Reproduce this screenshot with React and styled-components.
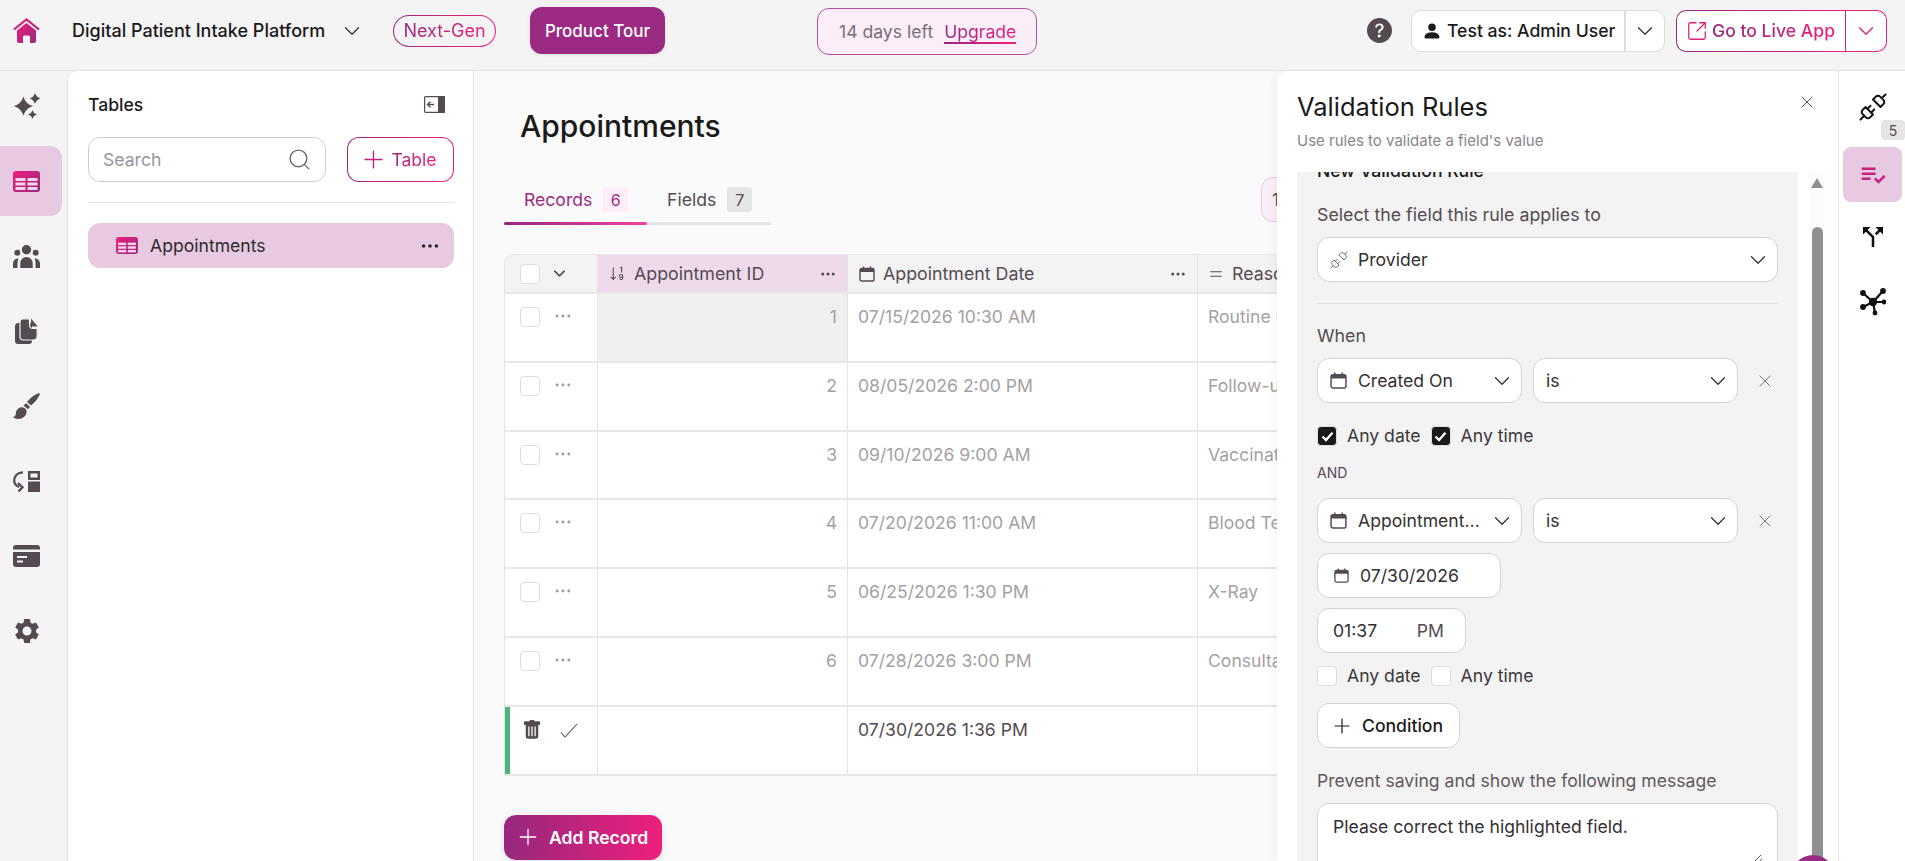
import React from "react";
import styled, { createGlobalStyle } from "styled-components";
import {
  ChevronDown, Search, Plus, X, Ellipsis, Unplug, SquareArrowOutUpRight, Equal,
} from "lucide-react";
import { BsSortNumericDown, BsTrashFill, BsPersonFill, BsQuestionCircleFill } from "react-icons/bs";
import { MdPlaylistAddCheck, MdCallSplit, MdSettings } from "react-icons/md";

const GRAD = "linear-gradient(90deg, #96287e, #ee1f7c)";
const INK = "#544b52";
const BASE = "17.6px";

const GlobalStyle = createGlobalStyle`
    html, body {
        margin: 0;
        height: 100%;
        overflow: hidden;
        background: #f4f4f4;
    }
    body, button, input {
        font-family: Inter, "Liberation Sans", sans-serif;
        font-size: ${BASE};
        color: #1b1a1b;
    }
    * {
        box-sizing: border-box;
    }
`

const Page = styled.div`
    height: 861px;
    display: flex;
    flex-direction: column;
    overflow: hidden;
`

const Header = styled.header`
    height: 71px;
    flex: none;
    display: flex;
    align-items: center;
    border-bottom: 1px solid #e3e3e3;
    padding: 0 18px 9px 13px;
`

const HomeLink = styled.div`
    width: 27px;
    height: 25px;
    margin-right: 32px;
    display: flex;
`

const AppName = styled.div`
    font-weight: 500;
    font-size: 18px;
    width: 252px;
    white-space: nowrap;
`

const HeaderChevron = styled.div`
    margin: 0 0 0 18px;
    width: 20px;
    display: flex;
    color: #333;
`

// lucide draws the chevron in the middle half of its box, so the box is trimmed
const Caret = styled(ChevronDown).attrs({ size: 26, strokeWidth: 1.2 })`
    flex: none;
    margin: -3px;
`

const GenPill = styled.div`
    margin-left: 31px;
    height: 32px;
    width: 103px;
    border-radius: 16px;
    border: 1.5px solid transparent;
    background: linear-gradient(#f4f4f4, #f4f4f4) padding-box, ${GRAD} border-box;
    display: flex;
    align-items: center;
    justify-content: center;
    font-size: 18px;
`

const GradText = styled.span`
    background: ${GRAD};
    -webkit-background-clip: text;
    background-clip: text;
    color: transparent;
`

const TourButton = styled.button`
    margin-left: 34px;
    width: 135px;
    height: 47px;
    border: none;
    border-radius: 12px;
    background: #9b2a82;
    color: #fff;
    font-size: 17px;
    font-weight: 500;
    box-shadow: 0 1px 4px rgba(0, 0, 0, 0.08);
`

const TrialBox = styled.div`
    margin: 2px 0 0 152px;
    width: 220px;
    height: 47px;
    border: 1px solid #b34f9f;
    border-radius: 12px;
    background: #fbeef9;
    display: flex;
    align-items: center;
    padding-left: 21px;
    gap: 11px;
    color: #7a6f76;
`

const UpgradeLink = styled(GradText)`
    position: relative;
    &::after {
        content: "";
        position: absolute;
        left: 0;
        right: 0;
        bottom: -2px;
        height: 2px;
        background: ${GRAD};
    }
`

const HeaderRight = styled.div`
    margin-left: auto;
    display: flex;
    align-items: center;
`

const HelpIcon = styled.div`
    display: flex;
    color: ${INK};
    margin-right: 19px;
`

const SplitButton = styled.div`
    height: 42px;
    display: flex;
    align-items: stretch;
    border-radius: 10px;
    border: 1px solid ${p => (p.$brand ? "transparent" : "#dcdcdc")};
    background: ${p =>
        p.$brand
            ? `linear-gradient(#fff, #fff) padding-box, ${GRAD} border-box`
            : "#fff"};
    margin-left: ${p => (p.$brand ? "11px" : "0")};
`

const SplitMain = styled.div`
    display: flex;
    align-items: center;
    gap: ${p => p.$gap}px;
    padding: 0 0 0 ${p => p.$pad}px;
    width: ${p => p.$width}px;
    font-weight: 500;
    white-space: nowrap;
`

const SplitCaret = styled.div`
    width: ${p => p.$width}px;
    display: flex;
    align-items: center;
    justify-content: center;
    border-left: ${p => (p.$brand ? "1px solid #d21f7c" : "2px solid #dcdcdc")};
    color: ${p => (p.$brand ? "#e0217c" : "#333")};
`

const Body = styled.div`
    flex: 1;
    min-height: 0;
    display: flex;
`

const LeftNav = styled.nav`
    width: 67px;
    flex: none;
    display: flex;
    flex-direction: column;
    gap: 5px;
`

const NavItem = styled.div`
    width: 62px;
    height: 70px;
    flex: none;
    display: flex;
    align-items: center;
    justify-content: center;
    padding-right: 9px;
    border-radius: 0 12px 12px 0;
    color: ${INK};
    background: ${p => (p.$active ? "#e8c9e2" : "transparent")};
`

const Sidebar = styled.aside`
    width: 407px;
    flex: none;
    background: #fff;
    border: 1px solid #e3e3e3;
    border-width: 0 1px 0 1px;
    border-top-left-radius: 10px;
    padding: 0 19px 0 20px;
`

const SidebarHead = styled.div`
    height: 66px;
    display: flex;
    align-items: center;
    justify-content: space-between;
    padding-right: 9px;
    font-weight: 500;
`

const SearchRow = styled.div`
    display: flex;
    justify-content: space-between;
    padding-bottom: 20px;
    border-bottom: 1px solid #e3e3e3;
`

const SearchBox = styled.div`
    width: 238px;
    height: 45px;
    border: 1px solid #cfcdce;
    border-radius: 12px;
    display: flex;
    align-items: center;
    justify-content: space-between;
    padding: 0 13px 0 14px;
    color: #97939a;
`

const OutlineButton = styled.button`
    width: 107px;
    height: 45px;
    border: 1px solid transparent;
    border-radius: 12px;
    background: linear-gradient(#fff, #fff) padding-box, ${GRAD} border-box;
    display: flex;
    align-items: center;
    justify-content: center;
    gap: 8px;
    padding: 0;
    color: #e0217c;
`

const TablePlus = styled(Plus).attrs({ size: 29, strokeWidth: 1.1 })`
    margin: -5px;
    color: #c2227f;
`

const TableLink = styled.div`
    margin-top: 20px;
    height: 45px;
    border-radius: 12px;
    background: #e8c9e2;
    display: flex;
    align-items: center;
    padding: 0 13px 0 28px;
    gap: 12px;
    color: #2e2a2d;
`

const Main = styled.main`
    position: relative;
    flex: 1;
    min-width: 0;
    background: #fafafa;
    overflow: hidden;
    padding: 36px 0 0 30px;
`

const Title = styled.h1`
    margin: 0 0 0 16px;
    font-size: 30px;
    line-height: 38px;
    font-weight: 500;
`

const TabRow = styled.div`
    display: flex;
    align-items: flex-start;
    margin-top: 42px;
`

const TabBar = styled.div`
    display: flex;
    border-bottom: 3px solid #e5e5e5;
    height: 38px;
`

const Tab = styled.div`
    position: relative;
    width: ${p => p.$width}px;
    height: 38px;
    padding-left: 20px;
    display: flex;
    align-items: flex-start;
    gap: 11px;
    line-height: 26px;
    color: ${p => (p.$active ? "#9b2a82" : INK)};
    ${p => p.$active && `
        &::after {
            content: "";
            position: absolute;
            left: 0;
            right: 0;
            bottom: 0;
            height: 3px;
            border-radius: 2px;
            background: linear-gradient(90deg, #96287e, #f2429b);
        }
    `}
`

const TabCount = styled.span`
    width: 25px;
    height: 25px;
    border-radius: 3px;
    display: flex;
    align-items: center;
    justify-content: center;
    font-size: 16px;
    background: ${p => (p.$active ? "#fceef8" : "#e5e5e5")};
`

const FilterChip = styled.div`
    margin: -10px 0 0 490px;
    width: 180px;
    height: 45px;
    border: 1px solid #e8c9e2;
    border-radius: 12px;
    background: #fceef8;
    display: flex;
    align-items: center;
    padding-left: 10px;
    color: ${INK};
`

const Grid = styled.div`
    margin-top: 29px;
    border-left: 1px solid #e3e3e3;
    border-top-left-radius: 10px;
    background: #fff;
`

const Row = styled.div`
    display: grid;
    grid-template-columns: 93px 250px 350px 1fr;
    height: ${p => (p.$head ? 40 : 68.8)}px;
    border-bottom: 2px solid #e8e8e8;
    ${p => p.$head && "border-top: 1px solid #e8e8e8; border-top-left-radius: 10px; background: #f3f3f3;"}
`

const ActionCell = styled.div`
    position: relative;
    display: flex;
    align-items: ${p => (p.$head ? "center" : "flex-start")};
    border-right: 1px solid #e3e3e3;
    padding: ${p => (p.$head ? "0 0 0 15px" : "13px 0 0 15px")};
    gap: ${p => (p.$head ? 10 : 13)}px;
    color: ${INK};
`

const SaveBar = styled.span`
    position: absolute;
    left: 0;
    top: 0;
    bottom: 0;
    width: 5px;
    background: #4fb57a;
`

const Box = styled.span`
    width: 20px;
    height: 20px;
    flex: none;
    display: flex;
    align-items: center;
    justify-content: center;
    border-radius: 4px;
    border: 1px solid #dedede;
    background: ${p => (p.$checked ? "#1b1a1b" : "#fff")};
`

const RowDots = styled.div`
    display: flex;
    color: #9d989c;
    margin-top: -1px;
`

const HeadCell = styled.div`
    display: flex;
    align-items: center;
    gap: ${p => p.$gap || 8}px;
    padding: 0 10px 0 ${p => p.$pad || 11}px;
    border-right: 1px solid #e3e3e3;
    color: ${INK};
    font-size: 17.8px;
    white-space: nowrap;
    background: ${p => (p.$sorted ? "#eedaeb" : "transparent")};
`

const HeadDots = styled.div`
    margin-left: auto;
    display: flex;
`

const Cell = styled.div`
    padding: 13px 10px 0 10px;
    line-height: 20px;
    border-right: 1px solid #e3e3e3;
    color: ${p => (p.$draft ? INK : "#a3a1a3")};
    text-align: ${p => (p.$right ? "right" : "left")};
    background: ${p => (p.$selected ? "#f0eeef" : "transparent")};
    white-space: nowrap;
    overflow: hidden;
`

const TrashMark = styled(BsTrashFill)`
    margin-left: 2px;
`

const CheckMark = styled.span`
    display: flex;
    margin: 3px 0 0 5px;
`

const AddButton = styled.button`
    margin-top: 39px;
    width: 158px;
    height: 45px;
    border: none;
    border-radius: 12px;
    background: ${GRAD};
    color: #fff;
    font-weight: 600;
    display: flex;
    align-items: center;
    padding: 0 0 0 14px;
    gap: 11px;
    box-shadow: 0 2px 6px rgba(0, 0, 0, 0.12);
`

const AddPlus = styled(Plus).attrs({ size: 26, strokeWidth: 1.2 })`
    margin: -3px;
`

const Drawer = styled.section`
    position: absolute;
    top: 0;
    right: 0;
    bottom: 0;
    width: 561px;
    display: flex;
    flex-direction: column;
    background: #fff;
    border-top-left-radius: 12px;
    box-shadow: -3px 0 8px rgba(0, 0, 0, 0.04);
    padding: 0 12px 0 20px;
`

const DrawerTop = styled.div`
    position: relative;
    height: 101px;
    flex: none;
`

const DrawerTitle = styled.h2`
    margin: 0;
    padding-top: 21px;
    font-size: 25.5px;
    line-height: 30px;
    font-weight: 400;
`

const DrawerSub = styled.p`
    margin: 9px 0 0;
    font-size: 15px;
    line-height: 20px;
    color: #8a858a;
`

const CloseIcon = styled.div`
    position: absolute;
    top: 21px;
    right: 9px;
    display: flex;
    color: #555;
`

const DrawerBody = styled.div`
    flex: 1;
    min-height: 0;
    display: flex;
`

const RuleForm = styled.div`
    width: 501px;
    flex: none;
    background: #f3f3f3;
    overflow: hidden;
    padding: 0 20px;
`

const RuleHeading = styled.div`
    margin-top: -11px;
    font-weight: 500;
    line-height: 20px;
`

const Label = styled.div`
    margin-top: ${p => p.$top}px;
    line-height: 20px;
    font-size: ${p => (p.$soft ? BASE : "17.8px")};
    color: ${p => (p.$soft ? "#5f585d" : INK)};
`

const Select = styled.div`
    margin-top: ${p => p.$top || 0}px;
    width: ${p => p.$width || "100%"};
    height: 45px;
    flex: none;
    background: #fff;
    border: 1px solid #d4d2d3;
    border-radius: 12px;
    display: flex;
    align-items: center;
    padding: 0 9px 0 12px;
    gap: 11px;
    white-space: nowrap;
    color: #332f32;
`

const SelectText = styled.span`
    flex: 1;
    overflow: hidden;
    text-overflow: ellipsis;
`

const FieldPlug = styled(Unplug)`
    margin: 0 -2px 0 -1px;
`

const Divider = styled.div`
    margin-top: 21px;
    border-top: 1px solid #e3e3e3;
`

const CondRow = styled.div`
    margin-top: ${p => p.$top}px;
    display: flex;
    align-items: center;
    gap: 11px;
`

const Remove = styled.div`
    display: flex;
    margin-left: 6px;
    color: #777;
`

const CheckRow = styled.div`
    margin-top: ${p => p.$top}px;
    display: flex;
    align-items: center;
    line-height: 20px;
    color: #3c373b;
`

const CheckLabel = styled.span`
    margin: 0 10px 0 10px;
`

const AndMark = styled.div`
    margin-top: 18px;
    font-size: 14px;
    line-height: 17px;
    color: ${INK};
`

const DateField = styled(Select)`
    padding-left: 16px;
`

const TimeField = styled(Select)`
    padding: 0 21px 0 15px;
    justify-content: space-between;
`

const TimePart = styled.span`
    color: ${p => (p.$soft ? INK : "#332f32")};
`

const ConditionButton = styled(Select)`
    padding: 0 15px;
    gap: 11px;
    font-weight: 500;
    color: #1b1a1b;
`

const ConditionPlus = styled(Plus).attrs({ size: 24, strokeWidth: 1.2 })`
    margin: -3px;
`

const MessageBox = styled.div`
    position: relative;
    margin-top: 12px;
    height: 110px;
    background: #fff;
    border: 1px solid #d4d2d3;
    border-radius: 12px;
    padding: 13px 15px;
    line-height: 20px;
    color: #332f32;
`

const ResizeMark = styled.svg`
    position: absolute;
    right: 14px;
    top: 50px;
`

const Scrollbar = styled.div`
    width: 16px;
    margin-left: 11px;
    display: flex;
    flex-direction: column;
    align-items: center;
    background: #fbfbfb;
`

const ScrollUp = styled.div`
    margin-top: 6px;
    width: 0;
    height: 0;
    border-left: 6px solid transparent;
    border-right: 6px solid transparent;
    border-bottom: 10px solid #8f8f8f;
`

const ScrollThumb = styled.div`
    margin-top: 39px;
    flex: 1;
    width: 11px;
    border-radius: 6px 6px 0 0;
    background: #8f8f8f;
`

const HelpBubble = styled.div`
    position: absolute;
    right: 3px;
    bottom: -38px;
    width: 44px;
    height: 44px;
    border-radius: 50%;
    background: #9b2a82;
`

const RightNav = styled.nav`
    width: 67px;
    flex: none;
    background: #fff;
    border-left: 1px solid #e3e3e3;
    display: flex;
    flex-direction: column;
    gap: 10px;
    padding: 11px 3px 0 4px;
`

const RightItem = styled.div`
    position: relative;
    height: 55px;
    flex: none;
    display: flex;
    align-items: center;
    justify-content: center;
    border-radius: 8px;
    color: #111;
    padding-bottom: ${p => (p.$active ? 0 : 5)}px;
    background: ${p => (p.$active ? "#e8c9e2" : "transparent")};
`

const CountBadge = styled.span`
    position: absolute;
    right: -3px;
    top: 38px;
    width: 24px;
    height: 20px;
    border-radius: 4px;
    background: #e5e5e5;
    font-size: 14px;
    color: ${INK};
    display: flex;
    align-items: center;
    justify-content: center;
`

// gradient shared by the brand coloured drawings
const GradDefs = () => (
    <svg width="0" height="0" style={{ position: "absolute" }} aria-hidden="true">
        <defs>
            <linearGradient id="brand" x1="0" y1="0" x2="1" y2="1">
                <stop offset="0" stopColor="#ee1f7c" />
                <stop offset="1" stopColor="#96287e" />
            </linearGradient>
        </defs>
    </svg>
)

const HomeIcon = () => (
    <svg width="27" height="25" viewBox="0 0 27 25">
        <path d="M1 11.5 13.5 1.5 26 11.5" fill="none" stroke="url(#brand)" strokeWidth="2.2" />
        <path d="M4 12.5 13.5 5 23 12.5V23a2 2 0 0 1-2 2h-4v-6a1.5 1.5 0 0 0-1.5-1.5h-4A1.5 1.5 0 0 0 10 19v6H6a2 2 0 0 1-2-2Z" fill="url(#brand)" />
    </svg>
)

const star = (x, y, r) => {
    const c = r * 0.22
    return `M${x} ${y - r}Q${x + c} ${y - c} ${x + r} ${y}Q${x + c} ${y + c} ${x} ${y + r}Q${x - c} ${y + c} ${x - r} ${y}Q${x - c} ${y - c} ${x} ${y - r}Z`
}

const SparkleIcon = () => (
    <svg width="27" height="26" viewBox="0 0 27 26" fill={INK}>
        <path d={star(10.4, 13, 9.6)} />
        <path d={star(22, 5.5, 5.5)} />
        <path d={star(19.5, 21.5, 4.5)} />
    </svg>
)

const TableIcon = ({ size = 27, h = 21 }) => (
    <svg width={size} height={h} viewBox="0 0 27 21">
        <rect width="27" height="21" rx="3" fill="url(#brand)" />
        <g fill="#f3d6ea">
            <rect x="2.5" y="7" width="10" height="3" />
            <rect x="14.5" y="7" width="10" height="3" />
            <rect x="2.5" y="11.5" width="10" height="3" />
            <rect x="14.5" y="11.5" width="10" height="3" />
            <rect x="2.5" y="16" width="10" height="3" />
            <rect x="14.5" y="16" width="10" height="3" />
        </g>
    </svg>
)

const PeopleIcon = () => (
    <svg width="27" height="23" viewBox="0 0 27 23" fill={INK}>
        <circle cx="13.5" cy="4.700" r="4.700" />
        <circle cx="4.300" cy="7.700" r="3" />
        <circle cx="22.700" cy="7.700" r="3" />
        <path d="M7.300 23v-5a6.200 6 0 0 1 12.400 0v5Z" />
        <path d="M0 23v-4.500a5 5 0 0 1 5.500-5C4.700 15 4.500 16.500 4.500 18v5Z" />
        <path d="M27 23v-4.500a5 5 0 0 0-5.500-5c.8 1.500 1 3 1 4.500v5Z" />
    </svg>
)

const DocsIcon = () => (
    <svg width="23" height="27" viewBox="0 0 23 27">
        <path d="M3.500 5H15a2 2 0 0 1 2 2v16a3 3 0 0 1-3 3H3a3 3 0 0 1-3-3V8.500A3.500 3.500 0 0 1 3.500 5Z" fill={INK} />
        <path d="M8 .8h6.500V7a3.500 3.500 0 0 0 3.500 3.500h4.200V18a4 4 0 0 1-4 4H8a3 3 0 0 1-3-3V3.800a3 3 0 0 1 3-3Z" fill={INK} stroke="#f4f4f4" strokeWidth="1.200" />
        <path d="M16 .5 22.700 8.500H18a2 2 0 0 1-2-2Z" fill={INK} />
    </svg>
)

const BrushIcon = () => (
    <svg width="27" height="26" viewBox="0 0 27 26" fill={INK}>
        <path d="M25.500.3c1-.4 1.700.4 1.300 1.300C24 7 21 10.500 18 12.500L14 9C17 5 21 2 25.500.3Z" />
        <path d="M13 10.200l4 3.500-2 2.500-4.500-3.800Z" />
        <path d="M9.300 14.200c2 .2 4.200 2 4.300 4 .2 4.500-4 7.700-8.500 7.700-2.500 0-4.600-.8-5.100-1.800 2.500-.5 2.700-2 2.900-4.400.3-3 3.100-5.700 6.400-5.500Z" />
    </svg>
)

const SwapIcon = () => (
    <svg width="27" height="21" viewBox="0 0 27 21" fill="none">
        <path d="M10 1.400C4.500 1.400 1.200 5 1.200 9.500c0 3 1.800 5.300 5 6.300" stroke={INK} strokeWidth="2.300" />
        <path d="M5 12 9.500 16.300 5.500 20.500" stroke={INK} strokeWidth="2.300" />
        <path fillRule="evenodd" d="M15 0h12v9H15ZM17.500 2.500v4h7v-4Z" fill={INK} />
        <rect x="15" y="10.500" width="12" height="10.500" fill={INK} />
    </svg>
)

const CardIcon = () => (
    <svg width="27" height="22" viewBox="0 0 27 22">
        <path d="M3 0h21a3 3 0 0 1 3 3v1.500H0V3a3 3 0 0 1 3-3Z" fill={INK} />
        <path d="M0 7h27v12a3 3 0 0 1-3 3H3a3 3 0 0 1-3-3Z" fill={INK} />
        <rect x="4" y="11" width="10" height="2" fill="#f4f4f4" />
        <rect x="4" y="15.500" width="6" height="2" fill="#f4f4f4" />
    </svg>
)

const CollapseIcon = () => (
    <svg width="21" height="17" viewBox="0 0 21 17" fill="none">
        <rect x="0.600" y="0.600" width="19.800" height="15.800" rx="1" stroke={INK} strokeWidth="1.200" />
        <rect x="14" y="0" width="7" height="17" rx="1" fill={INK} />
        <path d="M10 8.500H3.500M6.500 5.500l-3 3 3 3" stroke={INK} strokeWidth="1.300" />
    </svg>
)

const CalendarIcon = ({ size = 16, color = INK }) => (
    <svg width={size} height={size} viewBox="0 0 16 16" fill="none">
        <rect x="1" y="2.500" width="14" height="12.500" rx="1.800" stroke={color} strokeWidth="1.400" />
        <path d="M1 3.800a1.500 1.500 0 0 1 1.500-1.500h11A1.500 1.500 0 0 1 15 3.800V6H1Z" fill={color} />
        <path d="M4.500 0.500v2.500M11.500 0.500v2.500" stroke={color} strokeWidth="1.400" />
    </svg>
)

const NetworkIcon = () => (
    <svg width="26" height="28" viewBox="0 0 26 28" fill="#111" stroke="#111" strokeWidth="2.200">
        <path d="M3 5 13 14M23 3 13 14M24 14H13M3 19 13 14M15 25 13 14" fill="none" />
        <circle cx="13" cy="14" r="4.200" stroke="none" />
        <circle cx="3" cy="5" r="2.900" stroke="none" />
        <circle cx="23" cy="3" r="2.900" stroke="none" />
        <circle cx="24" cy="14" r="2.400" stroke="none" />
        <circle cx="3" cy="19" r="2.900" stroke="none" />
        <circle cx="15" cy="25" r="2.400" stroke="none" />
    </svg>
)

const TinyCheck = () => (
    <svg width="18" height="15" viewBox="0 0 18 15" fill="none">
        <path d="M1 9.500 5 14 17 1" stroke={INK} strokeWidth="1.100" />
    </svg>
)

const WhiteCheck = () => (
    <svg width="13" height="11" viewBox="0 0 13 11" fill="none">
        <path d="M1.500 5.500 5 9 11.500 1.800" stroke="#fff" strokeWidth="2.300" />
    </svg>
)

const records = [
    { id: 1, date: "07/15/2026 10:30 AM", reason: "Routine Check-up" },
    { id: 2, date: "08/05/2026 2:00 PM", reason: "Follow-up Visit" },
    { id: 3, date: "09/10/2026 9:00 AM", reason: "Vaccination" },
    { id: 4, date: "07/20/2026 11:00 AM", reason: "Blood Test" },
    { id: 5, date: "06/25/2026 1:30 PM", reason: "X-Ray" },
    { id: 6, date: "07/28/2026 3:00 PM", reason: "Consultation" },
]

const Condition = ({ top, field }) => (
    <CondRow $top={top}>
        <Select $width="205px">
            <CalendarIcon size={17} />
            <SelectText>{field}</SelectText>
            <Caret />
        </Select>
        <Select $width="205px">
            <SelectText>is</SelectText>
            <Caret />
        </Select>
        <Remove><X size={20} strokeWidth={1.2} /></Remove>
    </CondRow>
)

const AnyChecks = ({ top, checked }) => (
    <CheckRow $top={top}>
        <Box $checked={checked}>{checked && <WhiteCheck />}</Box>
        <CheckLabel>Any date</CheckLabel>
        <Box $checked={checked}>{checked && <WhiteCheck />}</Box>
        <CheckLabel>Any time</CheckLabel>
    </CheckRow>
)

const App = () => {
    return (
        <Page>
            <GlobalStyle />
            <GradDefs />
            <Header>
                <HomeLink><HomeIcon /></HomeLink>
                <AppName>Digital Patient Intake Platform</AppName>
                <HeaderChevron><Caret /></HeaderChevron>
                <GenPill><GradText>Next-Gen</GradText></GenPill>
                <TourButton>Product Tour</TourButton>
                <TrialBox>14 days left <UpgradeLink>Upgrade</UpgradeLink></TrialBox>
                <HeaderRight>
                    <HelpIcon><BsQuestionCircleFill size={25} /></HelpIcon>
                    <SplitButton>
                        <SplitMain $width={212} $gap={5} $pad={10}><BsPersonFill size={20} />Test as: Admin User</SplitMain>
                        <SplitCaret $width={40}><Caret /></SplitCaret>
                    </SplitButton>
                    <SplitButton $brand>
                        <SplitMain $width={168} $gap={4} $pad={9}>
                            <SquareArrowOutUpRight size={22} strokeWidth={1.4} color="#e0217c" />
                            <GradText>Go to Live App</GradText>
                        </SplitMain>
                        <SplitCaret $brand $width={41}><Caret /></SplitCaret>
                    </SplitButton>
                </HeaderRight>
            </Header>
            <Body>
                <LeftNav>
                    <NavItem><SparkleIcon /></NavItem>
                    <NavItem $active><TableIcon /></NavItem>
                    <NavItem><PeopleIcon /></NavItem>
                    <NavItem><DocsIcon /></NavItem>
                    <NavItem><BrushIcon /></NavItem>
                    <NavItem><SwapIcon /></NavItem>
                    <NavItem><CardIcon /></NavItem>
                    <NavItem><MdSettings size={30} /></NavItem>
                </LeftNav>
                <Sidebar>
                    <SidebarHead>Tables<CollapseIcon /></SidebarHead>
                    <SearchRow>
                        <SearchBox>Search<Search size={25} strokeWidth={1.3} color="#6b6569" /></SearchBox>
                        <OutlineButton>
                            <TablePlus />
                            <GradText>Table</GradText>
                        </OutlineButton>
                    </SearchRow>
                    <TableLink>
                        <TableIcon size={22} h={17} />
                        Appointments
                        <HeadDots><Ellipsis size={22} /></HeadDots>
                    </TableLink>
                </Sidebar>
                <Main>
                    <Title>Appointments</Title>
                    <TabRow>
                        <TabBar>
                            <Tab $active $width={143}>Records <TabCount $active>6</TabCount></Tab>
                            <Tab $width={124}>Fields <TabCount>7</TabCount></Tab>
                        </TabBar>
                        <FilterChip>1</FilterChip>
                    </TabRow>
                    <Grid>
                        <Row $head>
                            <ActionCell $head><Box /><ChevronDown size={19} strokeWidth={2} /></ActionCell>
                            <HeadCell $sorted><BsSortNumericDown size={17} />Appointment ID<HeadDots><Ellipsis size={18} /></HeadDots></HeadCell>
                            <HeadCell><CalendarIcon />Appointment Date<HeadDots><Ellipsis size={18} /></HeadDots></HeadCell>
                            <HeadCell $gap={7} $pad={9}><Equal size={18} strokeWidth={1.4} />Reason for Visit</HeadCell>
                        </Row>
                        {records.map((r, i) => (
                            <Row key={r.id}>
                                <ActionCell><Box /><RowDots><Ellipsis size={20} strokeWidth={1.5} /></RowDots></ActionCell>
                                <Cell $right $selected={i === 0}>{r.id}</Cell>
                                <Cell>{r.date}</Cell>
                                <Cell>{r.reason}</Cell>
                            </Row>
                        ))}
                        <Row>
                            <ActionCell>
                                <SaveBar />
                                <TrashMark size={20} />
                                <CheckMark><TinyCheck /></CheckMark>
                            </ActionCell>
                            <Cell />
                            <Cell $draft>07/30/2026 1:36 PM</Cell>
                            <Cell />
                        </Row>
                    </Grid>
                    <AddButton><AddPlus />Add Record</AddButton>
                    <Drawer>
                        <DrawerTop>
                            <DrawerTitle>Validation Rules</DrawerTitle>
                            <DrawerSub>Use rules to validate a field's value</DrawerSub>
                            <CloseIcon><X size={20} strokeWidth={1.2} /></CloseIcon>
                        </DrawerTop>
                        <DrawerBody>
                            <RuleForm>
                                <RuleHeading>New Validation Rule</RuleHeading>
                                <Label $top={24}>Select the field this rule applies to</Label>
                                <Select $top={12}>
                                    <FieldPlug size={20} strokeWidth={1.1} color="#6b6569" />
                                    <SelectText>Provider</SelectText>
                                    <Caret />
                                </Select>
                                <Divider />
                                <Label $top={22}>When</Label>
                                <Condition top={12} field="Created On" />
                                <AnyChecks top={23} checked />
                                <AndMark>AND</AndMark>
                                <Condition top={17} field="Appointment Date" />
                                <DateField $top={10} $width="184px">
                                    <CalendarIcon size={15} />
                                    07/30/2026
                                </DateField>
                                <TimeField $top={10} $width="149px">
                                    <TimePart>01:37</TimePart>
                                    <TimePart $soft>PM</TimePart>
                                </TimeField>
                                <AnyChecks top={13} />
                                <ConditionButton $top={17} $width="143px">
                                    <ConditionPlus />Condition
                                </ConditionButton>
                                <Label $top={23} $soft>Prevent saving and show the following message</Label>
                                <MessageBox>
                                    Please correct the highlighted field.
                                    <ResizeMark width="10" height="8" viewBox="0 0 10 8" fill="none">
                                        <path d="M1 8 8 1M6 8l3-3.500" stroke="#555" />
                                    </ResizeMark>
                                </MessageBox>
                            </RuleForm>
                            <Scrollbar>
                                <ScrollUp />
                                <ScrollThumb />
                            </Scrollbar>
                        </DrawerBody>
                        <HelpBubble />
                    </Drawer>
                </Main>
                <RightNav>
                    <RightItem><Unplug size={30} strokeWidth={1.6} /><CountBadge>5</CountBadge></RightItem>
                    <RightItem $active><MdPlaylistAddCheck size={30} color="#c81f7e" /></RightItem>
                    <RightItem><MdCallSplit size={30} /></RightItem>
                    <RightItem><NetworkIcon /></RightItem>
                </RightNav>
            </Body>
        </Page>
    )
}

export default App;
